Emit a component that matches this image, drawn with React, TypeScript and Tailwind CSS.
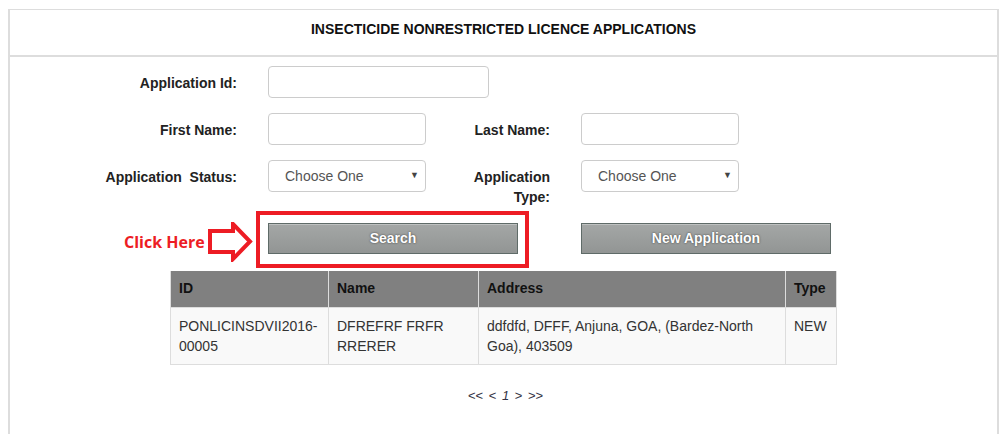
import React from "react";

const font = { fontFamily: '"Liberation Sans", Arial, sans-serif' };

function Label({ children, className = "" }: { children: React.ReactNode; className?: string }) {
  return (
    <label className={`text-[14px] font-bold text-[#222] text-right leading-[20px] pt-[7px] ${className}`}>
      {children}
    </label>
  );
}

function TextInput({ w }: { w: string }) {
  return (
    <input
      type="text"
      className={`${w} h-[32px] border border-[#ccc] rounded-[4px] bg-white px-3 text-[14px] outline-none`}
    />
  );
}

function Select() {
  return (
    <div className="relative w-[158px] h-[32px]">
      <select className="appearance-none w-full h-full border border-[#ccc] rounded-[4px] bg-white pl-[16px] text-[14px] text-[#555] outline-none">
        <option>Choose One</option>
      </select>
      <span className="absolute right-[7px] top-[9px] text-[9px] text-[#444] pointer-events-none">▼</span>
    </div>
  );
}

function GrayButton({ children }: { children: React.ReactNode }) {
  return (
    <button className="w-[250px] h-[31px] border border-[#5f6b68] bg-gradient-to-b from-[#a4a7a6] to-[#929594] text-white text-[14px] font-bold [text-shadow:0_0_2px_#333] shadow-[inset_0_1px_0_rgba(255,255,255,0.3)]">
      {children}
    </button>
  );
}

export default function App() {
  return (
    <div className="w-[1007px] h-[434px] overflow-hidden bg-white" style={font}>
      <div className="ml-[8px] mt-[9px] w-[991px] h-[440px] border-x-2 border-t border-[#ddd]">
        {/* HEADER */}
        <div className="h-[47px] border-b-[2px] border-[#ddd] flex justify-center pt-[10px]">
          <h1 className="text-[14px] leading-[18px] font-bold text-[#111]">
            INSECTICIDE NONRESTRICTED LICENCE APPLICATIONS
          </h1>
        </div>

        {/* FORM */}
        <div className="pt-[9px] text-[#222]">
          <div className="flex">
            <Label className="w-[227px]">Application Id:</Label>
            <div className="ml-[31px]">
              <TextInput w="w-[221px]" />
            </div>
          </div>

          <div className="flex mt-[15px]">
            <Label className="w-[227px]">First Name:</Label>
            <div className="ml-[31px]">
              <TextInput w="w-[158px]" />
            </div>
            <Label className="w-[109px] ml-[15px]">Last Name:</Label>
            <div className="ml-[31px]">
              <TextInput w="w-[158px]" />
            </div>
          </div>

          <div className="flex mt-[15px]">
            <Label className="w-[227px]">Application&nbsp; Status:</Label>
            <div className="ml-[31px]">
              <Select />
            </div>
            <Label className="w-[94px] ml-[30px] pt-[7px]">Application Type:</Label>
            <div className="ml-[31px]">
              <Select />
            </div>
          </div>

          {/* BUTTONS */}
          <div className="flex mt-[16px] relative">
            <div className="ml-[258px]">
              <GrayButton>Search</GrayButton>
            </div>
            <div className="ml-[63px]">
              <GrayButton>New Application</GrayButton>
            </div>

            {/* annotation */}
            <div className="absolute left-[246px] top-[-12px] w-[273px] h-[57px] border-[4px] border-[#ed1c24] pointer-events-none" />
            <span
              className="absolute left-[114px] top-[8px] text-[#ed1c24] text-[16px] font-bold leading-[22px]"
              style={{ fontFamily: '"Open Sans", sans-serif' }}
            >
              Click Here
            </span>
            <svg className="absolute left-[197px] top-[-1px]" width="46" height="40" viewBox="0 0 46 40">
              <polygon
                points="3,9 26,9 26,2 43,19.5 26,37 26,30 3,30"
                fill="white"
                stroke="#ed1c24"
                strokeWidth="4"
                strokeLinejoin="miter"
              />
            </svg>
          </div>

          {/* TABLE */}
          <div className="mt-[17px] ml-[160px]">
            <table className="table-fixed border-collapse text-[14px] w-[666px]">
              <colgroup>
                <col className="w-[158px]" />
                <col className="w-[150px]" />
                <col className="w-[307px]" />
                <col className="w-[51px]" />
              </colgroup>
              <thead>
                <tr className="bg-[#808080] text-[#111] h-[36px]">
                  <th className="text-left font-bold px-[8px] border border-[#ddd] border-t-0">ID</th>
                  <th className="text-left font-bold px-[8px] border border-[#ddd] border-t-0">Name</th>
                  <th className="text-left font-bold px-[8px] border border-[#ddd] border-t-0">Address</th>
                  <th className="text-left font-bold px-[8px] border border-[#ddd] border-t-0">Type</th>
                </tr>
              </thead>
              <tbody>
                <tr className="bg-[#f9f9f9] text-[#333] align-top leading-[20px]">
                  <td className="px-[8px] pt-[8px] pb-[8px] border border-[#ddd]">PONLICINSDVII2016-00005</td>
                  <td className="px-[8px] pt-[8px] pb-[8px] border border-[#ddd]">DFREFRF FRFR RRERER</td>
                  <td className="px-[8px] pt-[8px] pb-[8px] border border-[#ddd]">ddfdfd, DFFF, Anjuna, GOA, (Bardez-North Goa), 403509</td>
                  <td className="px-[8px] pt-[8px] pb-[8px] border border-[#ddd]">NEW</td>
                </tr>
              </tbody>
            </table>
          </div>

          {/* PAGINATION */}
          <div className="mt-[21px] flex justify-center text-[13px] text-[#334] pl-[4px] [word-spacing:2px]">
            <span>&lt;&lt; &lt; <i>1</i> &gt; &gt;&gt;</span>
          </div>
        </div>
      </div>
    </div>
  );
}
